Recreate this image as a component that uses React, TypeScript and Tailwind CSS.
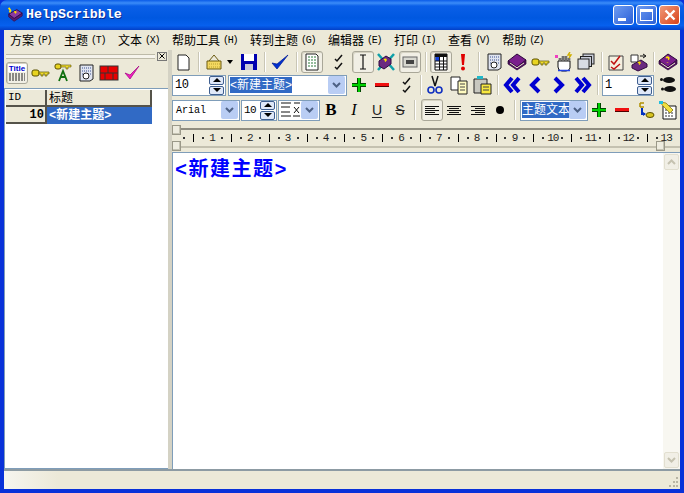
import type { ReactNode } from "react";

const Tool = ({ pressed, className = "", children }: { pressed?: boolean; className?: string; children?: ReactNode }) => (
  <div
    className={`flex h-[22px] w-[22px] shrink-0 items-center justify-center ${
      pressed ? "rounded-[3px] border border-[#a9a798] bg-[#f1efe5] shadow-[inset_1px_1px_0_#d5d2c2]" : ""
    } ${className}`}
  >
    {children}
  </div>
);

const Sep = ({ className = "" }: { className?: string }) => (
  <div className={`h-[20px] w-[2px] shrink-0 border-r border-white bg-[#c9c6b5] ${className}`} />
);

const Ico = ({ children, size = 20 }: { children: ReactNode; size?: number }) => (
  <svg width={size} height={size} viewBox="0 0 20 20" className="block">
    {children}
  </svg>
);

const DropBtn = () => (
  <div className="flex h-[18px] w-[17px] shrink-0 items-center justify-center rounded-[2px] bg-[#b9cdf4]">
    <svg width="9" height="6" viewBox="0 0 9 6">
      <path d="M1 1l3.5 3.5L8 1" fill="none" stroke="#4d6185" strokeWidth="2" />
    </svg>
  </div>
);

const Spin = ({ value, className = "", text = "text-[12px]" }: { value: string; className?: string; text?: string }) => (
  <div className={`flex h-[21px] shrink-0 items-center justify-between border border-[#7f9db9] bg-white pl-[2px] pr-[1px] ${className}`}>
    <span className={`font-['Liberation_Mono',monospace] leading-none tracking-[-0.5px] text-black ${text}`}>{value}</span>
    <div className="flex w-[15px] flex-col gap-[1px]">
      <div className="flex h-[9px] items-center justify-center rounded-[2px] border border-[#3f5f90] bg-[#dfe8f8]">
        <div className="h-0 w-0 border-x-[4px] border-b-[4px] border-x-transparent border-b-black" />
      </div>
      <div className="flex h-[9px] items-center justify-center rounded-[2px] border border-[#3f5f90] bg-[#dfe8f8]">
        <div className="h-0 w-0 border-x-[4px] border-t-[4px] border-x-transparent border-t-black" />
      </div>
    </div>
  </div>
);

const Combo = ({ className = "", children }: { className?: string; children?: ReactNode }) => (
  <div className={`flex h-[21px] shrink-0 items-center justify-between border border-[#7f9db9] bg-white pl-[1px] pr-[1px] ${className}`}>
    <div className="flex min-w-0 items-center overflow-hidden">{children}</div>
    <DropBtn />
  </div>
);

const Plus = () => (
  <Ico>
    <path d="M10 3v14M3 10h14" stroke="#004800" strokeWidth="4" />
    <path d="M10 3v14M3 10h14" stroke="#00d000" strokeWidth="2" />
  </Ico>
);
const Minus = () => (
  <Ico>
    <rect x="3" y="8" width="14" height="3" fill="#f01010" />
    <rect x="3" y="11" width="14" height="1" fill="#500000" />
  </Ico>
);
const Checks = () => (
  <Ico>
    <path d="M6 7l2 2 5-6M6 15l2 2 5-6" fill="none" stroke="#111" strokeWidth="1.5" />
  </Ico>
);
const Key = () => (
  <Ico>
    <rect x="2" y="7" width="7" height="6" rx="2" fill="#e8d420" stroke="#5a5000" />
    <path d="M9 9h10v2h-2v2h-2v-2h-2v2h-2v-2H9z" fill="#f0dc30" stroke="#5a5000" strokeWidth="0.7" />
  </Ico>
);
const Book = ({ mark }: { mark?: boolean }) => (
  <Ico>
    <path d="M1 9l9-7 9 6-9 7z" fill="#7a1f8c" stroke="#2a0638" />
    <path d="M1 9v3l9 6 9-6V8l-9 7z" fill="#50125f" stroke="#2a0638" strokeWidth="0.7" />
    <path d="M3 11l7 4.8 7-4.8" fill="none" stroke="#f0e8d0" />
    {mark && <path d="M8 6c2-2 4 0 2 1.5M9.5 10v.5" fill="none" stroke="#ffe000" strokeWidth="1.6" />}
  </Ico>
);
const DocLines = () => (
  <Ico>
    <path d="M4 2h10l2 2v14H4z" fill="#fff" stroke="#222" />
    <path d="M6 5h8M6 8h8M6 11h8M6 14h8" stroke="#2a7a3a" strokeWidth="1.2" strokeDasharray="2 1" />
  </Ico>
);
const DocDots = () => (
  <Ico>
    <path d="M4 2h13v14l-3 2H4z" fill="#dfe4f0" stroke="#222" />
    <path d="M6 5h9M6 8h9M6 11h3M12 11h3" stroke="#3a5090" strokeDasharray="1 1" />
    <circle cx="10" cy="13" r="3" fill="#fff" stroke="#222" />
  </Ico>
);
const Arrow = ({ dir, dbl }: { dir: "l" | "r"; dbl?: boolean }) => (
  <Ico>
    <g fill="none" stroke="#0000d0" strokeWidth="4" transform={dir === "l" ? "translate(20 0) scale(-1 1)" : undefined}>
      {dbl ? (
        <>
          <path d="M3 3l6 7-6 7" />
          <path d="M10 3l6 7-6 7" />
        </>
      ) : (
        <path d="M6 3l7 7-7 7" />
      )}
    </g>
  </Ico>
);
const AlignLines = ({ kind }: { kind: "l" | "c" | "r" }) => {
  const widths = [14, 10, 14, 10, 14];
  return (
    <svg width="14" height="11" viewBox="0 0 14 11" shapeRendering="crispEdges">
      {widths.map((w, i) => (
        <rect key={i} x={kind === "l" ? 0 : kind === "c" ? (14 - w) / 2 : 14 - w} y={i * 2 + 1} width={w} height="1" fill="#111" />
      ))}
    </svg>
  );
};
const Smiley = () => (
  <Ico>
    <path d="M5 3h4M5 3v4M5 7h4" stroke="#b09000" strokeWidth="1.5" fill="none" />
    <path d="M7 8v6h3" stroke="#0030c0" strokeWidth="2" fill="none" />
    <path d="M8 12l3 2-3 2z" fill="#0030c0" />
    <ellipse cx="15" cy="15" rx="4" ry="2.5" fill="#d8c420" stroke="#5a5000" />
  </Ico>
);
const Wand = () => (
  <Ico>
    <path d="M5 6h13v13H5z" fill="#fff" stroke="#111" />
    <path d="M7 10h9M7 13h9M7 16h9" stroke="#333" strokeDasharray="2 1" />
    <path d="M2 2l6 1 7 7-3 3-7-7z" fill="#f0e040" stroke="#807000" strokeWidth="0.7" />
    <rect x="1" y="1" width="4" height="3" fill="#20c0e0" />
  </Ico>
);
const Foot = () => (
  <Ico>
    <ellipse cx="10" cy="5" rx="6" ry="3" fill="#111" />
    <circle cx="2.5" cy="4.5" r="1.5" fill="#111" />
    <ellipse cx="11" cy="14" rx="6" ry="3" fill="#111" />
    <circle cx="3.5" cy="14" r="1.5" fill="#111" />
  </Ico>
);

const Menu = ({ label, k }: { label: string; k: string }) => (
  <div className="flex items-center">
    <span>{label}</span>
    <span className="ml-[3px] w-[14px] font-['Liberation_Mono',monospace] text-[10px] tracking-[-1.3px]">({k})</span>
  </div>
);

const menus = [
  ["方案", "P"],
  ["主题", "T"],
  ["文本", "X"],
  ["帮助工具", "H"],
  ["转到主题", "G"],
  ["编辑器", "E"],
  ["打印", "I"],
  ["查看", "V"],
  ["帮助", "Z"],
];

const Dot = () => <span className="mx-auto h-[2px] w-[2px] bg-[#333]" />;

const Ruler = () => (
  <div className="relative h-[20px] overflow-hidden border-y-2 border-t-[#8f8d80] border-b-[#c4c1b0] bg-[#ece9d8]">
    <div className="flex h-full pl-[7.5px] font-['Liberation_Mono',monospace] text-[11px] text-[#222]">
      {Array.from({ length: 13 }, (_, i) => (
        <div key={i} className="grid w-[37.8px] shrink-0 grid-cols-4 items-center justify-items-center">
          <Dot />
          <span className="mx-auto h-[8px] w-px bg-black" />
          <Dot />
          <span className={i >= 9 ? "tracking-[-1px]" : ""}>{i + 1}</span>
        </div>
      ))}
    </div>
  </div>
);

const Thumb = ({ className = "" }: { className?: string }) => (
  <div className={`absolute h-[10px] w-[9px] border border-[#9a9888] bg-[#eeecdf] shadow-[inset_-1px_-1px_0_#c6c4b4] ${className}`} />
);

const ScrollBtn = ({ up }: { up?: boolean }) => (
  <div className="flex h-[16px] w-[15px] items-center justify-center rounded-[2px] border border-[#e2dfd0] bg-[#f1efe6]">
    <svg width="9" height="6" viewBox="0 0 9 6">
      <path d={up ? "M1 5l3.5-3.5L8 5" : "M1 1l3.5 3.5L8 1"} fill="none" stroke="#c5c2b0" strokeWidth="2" />
    </svg>
  </div>
);

export default function App() {
  return (
    <div className="flex h-[493px] w-[684px] flex-col overflow-hidden bg-[#0831d9] font-['Liberation_Sans','Noto_Sans_CJK_SC',sans-serif]">
      {/* title bar */}
      <div className="flex h-[30px] shrink-0 items-center rounded-t-[7px] bg-[linear-gradient(to_bottom,#0a5be8_0%,#3b8cf8_10%,#0a5fe8_20%,#0058e0_60%,#0660ee_85%,#0340c8_100%)] pl-[6px] pr-[4px]">
        <svg width="18" height="18" viewBox="0 0 20 20">
          <path d="M3 9l9-5 6 4-9 6z" fill="#8a3aa0" stroke="#300a40" />
          <path d="M3 9v3l6 5 9-6V8l-9 6z" fill="#5a1a70" stroke="#300a40" strokeWidth="0.7" />
          <path d="M3 2l2 3-1 2" fill="none" stroke="#ffe000" strokeWidth="2" />
          <path d="M9 7c2-2 3 0 1 1" fill="none" stroke="#ffe000" strokeWidth="1.4" />
        </svg>
        <span className="ml-[2px] font-['Liberation_Mono',monospace] text-[13.3px] font-bold text-white [text-shadow:1px_1px_0_#0a2a90]">
          HelpScribble
        </span>
        <div className="ml-auto flex items-center gap-[2px]">
          <div className="flex h-[20px] w-[21px] items-end rounded-[3px] border border-white bg-[linear-gradient(135deg,#6f9cf0,#2a5fd8)] pb-[3px] pl-[4px]">
            <div className="h-[3px] w-[8px] bg-white" />
          </div>
          <div className="flex h-[20px] w-[21px] items-center justify-center rounded-[3px] border border-white bg-[linear-gradient(135deg,#6f9cf0,#2a5fd8)]">
            <div className="h-[12px] w-[13px] border border-t-[3px] border-white" />
          </div>
          <div className="flex h-[20px] w-[21px] items-center justify-center rounded-[3px] border border-white bg-[linear-gradient(135deg,#f09a78,#d8421a)]">
            <svg width="12" height="12" viewBox="0 0 12 12">
              <path d="M1.5 1.5l9 9M10.5 1.5l-9 9" stroke="#fff" strokeWidth="2.4" />
            </svg>
          </div>
        </div>
      </div>

      {/* client area inside the blue frame */}
      <div className="mx-[4px] mb-[4px] flex min-h-0 flex-1 flex-col bg-[#ece9d8]">
        <div className="flex h-[20px] shrink-0 items-center gap-[13px] pt-[1px] pl-[6px] text-[12px] text-black">
          {menus.map(([label, k]) => (
            <Menu key={k} label={label} k={k} />
          ))}
        </div>

        <div className="flex min-h-0 flex-1 border-b-2 border-[#8d9ba3]">
          {/* left panel */}
          <div className="flex w-[164px] shrink-0 flex-col">
            <div className="flex h-[12px] items-center pl-[2px]">
              <div className="h-[5px] w-[149px] border-y border-[#bdbaa8] bg-[#f6f4ec]" />
              <div className="ml-[2px] flex h-[9px] w-[10px] items-center justify-center border border-[#777] bg-[#ece9d8]">
                <svg width="6" height="6" viewBox="0 0 6 6">
                  <path d="M0.5 0.5l5 5M5.5 0.5l-5 5" stroke="#000" />
                </svg>
              </div>
            </div>
            <div className="flex h-[26px] items-start pl-[2px]">
              <Tool pressed>
                <svg width="18" height="18" viewBox="0 0 18 18">
                  <rect x="0" y="0" width="18" height="8" fill="#fff" />
                  <text x="9" y="7" textAnchor="middle" fontSize="8" fontWeight="700" fontFamily="Liberation Sans" fill="#0000d0">Title</text>
                  <path d="M1 10h16M1 12h16M1 14h16M1 16h16" stroke="#222" strokeDasharray="2 1" />
                </svg>
              </Tool>
              <Tool className="ml-[1px]"><Key /></Tool>
              <Tool className="ml-[1px]">
                <Ico>
                  <rect x="2" y="1" width="6" height="5" rx="2" fill="#e8d420" stroke="#5a5000" />
                  <path d="M8 2h10v2h-3v2h-2V4H8z" fill="#f0dc30" stroke="#5a5000" strokeWidth="0.6" />
                  <path d="M6 18l4-10 4 10M7.5 14h5" fill="none" stroke="#107010" strokeWidth="1.8" />
                </Ico>
              </Tool>
              <Tool className="ml-[1px]"><DocDots /></Tool>
              <Tool className="ml-[1px]">
                <Ico>
                  <rect x="1" y="3" width="18" height="14" fill="#e80000" stroke="#333" />
                  <path d="M1 10h18M9 3v7M6 10v7M14 10v7" stroke="#333" />
                </Ico>
              </Tool>
              <Tool className="ml-[1px]">
                <Ico>
                  <path d="M3 10l5 6 9-13-9 9z" fill="#f020c0" stroke="#a00080" strokeWidth="0.7" />
                </Ico>
              </Tool>
            </div>
            <div className="min-h-0 flex-1 border border-[#7f9db9] border-r-0 bg-white pt-[1px] pl-[1px] pr-[15px]">
              <div className="grid grid-cols-[41px_105px] text-[12px] text-black">
                <div className="flex h-[17px] items-center border-r-2 border-b-2 border-[#55534a] bg-[#ece9d8] pl-[2px] font-['Liberation_Mono',monospace] text-[11px]">ID</div>
                <div className="flex h-[17px] items-center border-r-2 border-b-2 border-[#55534a] bg-[#ece9d8] pl-[2px]">标题</div>
                <div className="flex h-[17px] items-center justify-end border-r-2 border-b-2 border-[#55534a] bg-[#ece9d8] pr-[1px] font-['Liberation_Mono',monospace] text-[12px] font-bold">10</div>
                <div className="flex h-[17px] items-center whitespace-nowrap bg-[#316ac5] pl-[2px] font-['Liberation_Mono','Noto_Sans_CJK_SC',monospace] text-[12px] font-bold text-white">&lt;新建主题&gt;</div>
              </div>
            </div>
          </div>

          {/* splitter */}
          <div className="w-[4px] shrink-0 bg-[#d4d2c4]" />

          {/* right panel */}
          <div className="relative flex min-w-0 flex-1 flex-col">
            <div className="flex h-[23px] shrink-0 items-center pl-0">
              <Tool>
                <Ico>
                  <path d="M5 3h8l3 3v12H5z" fill="#fff" stroke="#222" />
                </Ico>
              </Tool>
              <Sep className="ml-[4px]" />
              <Tool className="ml-[3px]">
                <Ico>
                  <path d="M3 9h14v8H3z" fill="#f4d860" stroke="#6a5a10" />
                  <path d="M5 9l5-6 5 6" fill="none" stroke="#6a5a10" />
                  <path d="M3 12h14M3 15h14" stroke="#b8a030" strokeDasharray="1 1" />
                </Ico>
              </Tool>
              <div className="ml-[2px] h-0 w-0 shrink-0 border-x-[3.5px] border-t-[4px] border-x-transparent border-t-black" />
              <Tool className="ml-[5px]">
                <Ico>
                  <path d="M2 2h16v16H2z" fill="#0000b0" />
                  <rect x="5" y="2" width="10" height="7" fill="#fff" />
                  <rect x="6" y="12" width="8" height="6" fill="#c8c8d8" />
                </Ico>
              </Tool>
              <Sep className="ml-[4px]" />
              <Tool className="ml-[3px]">
                <Ico>
                  <path d="M2 11l5 6L18 3 7 12z" fill="#0030d0" stroke="#001890" strokeWidth="0.7" />
                </Ico>
              </Tool>
              <Sep className="ml-[5px]" />
              <Tool pressed className="ml-[3px]"><DocLines /></Tool>
              <Tool className="ml-[5px] w-[16px]"><Checks /></Tool>
              <Tool pressed className="ml-[2px]">
                <Ico>
                  <path d="M7 3h6M7 17h6M10 3v14" stroke="#111" strokeWidth="1.2" fill="none" />
                </Ico>
              </Tool>
              <Tool className="ml-[1px]">
                <Ico>
                  <path d="M2 2l7 8-7 8M18 2l-7 8 7 8" fill="none" stroke="#0fa0a8" strokeWidth="2.5" />
                  <path d="M3 9l7-5 5 3v5l-7 5-5-3z" fill="#6a2a80" stroke="#300a40" />
                  <path d="M8 8c2-2 3 0 1 1.5" fill="none" stroke="#ffe000" strokeWidth="1.5" />
                </Ico>
              </Tool>
              <Tool pressed className="ml-[2px]">
                <Ico>
                  <rect x="3" y="5" width="14" height="10" fill="#d8d8d0" stroke="#666" />
                  <rect x="6" y="8" width="8" height="4" fill="#444" />
                </Ico>
              </Tool>
              <Sep className="ml-[4px]" />
              <Tool pressed className="ml-[3px]">
                <Ico>
                  <path d="M4 2h12v16H4z" fill="#fff" stroke="#111" />
                  <rect x="4" y="2" width="12" height="3" fill="#111" />
                  <rect x="4.5" y="5" width="4" height="4" fill="#1040e0" />
                  <path d="M4 9h12M4 12h12M4 15h12M8.5 5v13M12.5 5v13" stroke="#111" />
                </Ico>
              </Tool>
              <Tool>
                <Ico>
                  <path d="M8 2h4l-1 11H9z" fill="#e00000" />
                  <circle cx="10" cy="16.5" r="2" fill="#e00000" />
                </Ico>
              </Tool>
              <Sep className="ml-[4px]" />
              <Tool className="ml-[3px]"><DocDots /></Tool>
              <Tool className="ml-[1px]"><Book /></Tool>
              <Tool className="ml-[1px]"><Key /></Tool>
              <Tool className="ml-[2px]">
                <Ico>
                  <path d="M4 9h12v7q-1 3-4 3H8q-4 0-4-4z" fill="#fff" stroke="#111" />
                  <path d="M6 9V6M9 9V4M12 9V4M15 9V6" stroke="#111" strokeWidth="2.4" />
                  <path d="M6 9V6M9 9V4M12 9V4M15 9V6" stroke="#fff" strokeWidth="0.8" />
                  <path d="M4 18.5h12" stroke="#2040e0" strokeWidth="1.5" />
                  <path d="M16 0l-2 3h3l-2 3" stroke="#d0b000" fill="none" strokeWidth="1.4" />
                  <rect x="1" y="3" width="3" height="3" fill="#f040c0" />
                </Ico>
              </Tool>
              <Tool>
                <Ico>
                  <rect x="7" y="2" width="11" height="10" fill="#c8ccd8" stroke="#222" />
                  <rect x="4.5" y="4.5" width="11" height="10" fill="#c8ccd8" stroke="#222" />
                  <rect x="2" y="7" width="11" height="10" fill="#d8dce4" stroke="#222" />
                </Ico>
              </Tool>
              <Sep className="ml-[4px]" />
              <Tool className="ml-[2px]">
                <Ico>
                  <path d="M3 4h14v14H3z" fill="#f4f0e0" stroke="#444" />
                  <path d="M5 9l3 3 6-8M5 15l3 2 6-5" fill="none" stroke="#c01010" strokeWidth="1.5" />
                </Ico>
              </Tool>
              <Tool className="ml-[1px]">
                <Ico>
                  <path d="M2 3h7v7H2z" fill="#fff" stroke="#333" />
                  <path d="M11 4h5M14 2l3 2-3 2" stroke="#111" fill="none" />
                  <path d="M3 13l9-5 6 4v3l-9 4-6-3z" fill="#6a2a80" stroke="#300a40" />
                  <path d="M9 11c2-2 3 0 1 1.5" fill="none" stroke="#ffe000" strokeWidth="1.4" />
                </Ico>
              </Tool>
              <Sep className="ml-[3px]" />
              <Tool className="ml-[2px]"><Book mark /></Tool>
            </div>

            <div className="flex h-[24px] shrink-0 items-center">
              <Spin value="10" className="w-[54px]" />
              <Combo className="ml-[2px] w-[119px]">
                <span className="bg-[#316ac5] text-[12px] leading-[16px] text-white">&lt;新建主题&gt;</span>
              </Combo>
              <Tool className="ml-[1px]"><Plus /></Tool>
              <Tool className="ml-[1px]"><Minus /></Tool>
              <Tool className="ml-[3px]"><Checks /></Tool>
              <Sep className="ml-[2px]" />
              <Tool className="ml-[2px]">
                <Ico>
                  <path d="M7 1l3 10M13 1l-3 10" stroke="#111" strokeWidth="1.5" />
                  <circle cx="6" cy="15" r="3" fill="none" stroke="#1030c0" strokeWidth="1.6" />
                  <circle cx="14" cy="15" r="3" fill="none" stroke="#1030c0" strokeWidth="1.6" />
                </Ico>
              </Tool>
              <Tool className="ml-[2px]">
                <Ico>
                  <path d="M2 2h9v13H2z" fill="#fff" stroke="#222" />
                  <path d="M9 6h9v13H9z" fill="#fffbc0" stroke="#222" />
                  <path d="M11 9h5M11 12h5M11 15h5" stroke="#444" />
                </Ico>
              </Tool>
              <Tool className="ml-[1px]">
                <Ico>
                  <path d="M2 4h13v14H2z" fill="#c8c8c0" stroke="#222" />
                  <rect x="5" y="1" width="6" height="3" fill="#20b8c8" />
                  <path d="M9 9h10v10H9z" fill="#f8e840" stroke="#222" />
                  <path d="M11 12h6M11 15h6" stroke="#444" />
                </Ico>
              </Tool>
              <Sep className="ml-[4px]" />
              <Tool className="ml-[2px]"><Arrow dir="l" dbl /></Tool>
              <Tool className="ml-[1px]"><Arrow dir="l" /></Tool>
              <Tool className="ml-[2px]"><Arrow dir="r" /></Tool>
              <Tool className="ml-[2px]"><Arrow dir="r" dbl /></Tool>
              <Sep className="ml-[3px]" />
              <Spin value="1" className="ml-[3px] w-[52px]" />
              <Tool className="ml-[4px]"><Foot /></Tool>
            </div>

            <div className="flex h-[26px] shrink-0 items-center">
              <Combo className="w-[68px]">
                <span className="pl-[2px] font-['Liberation_Mono',monospace] text-[10px] text-black">Arial</span>
              </Combo>
              <Spin value="10" text="text-[11px]" className="ml-[1px] w-[36px]" />
              <Combo className="ml-[1px] w-[42px]">
                <svg width="21" height="16" viewBox="0 0 21 16">
                  <path d="M1 1h10M1 5h9M1 10h9M1 14h10M14 1h6M13 14h7M14 5l5 6M19 5l-5 6" stroke="#111" fill="none" />
                </svg>
              </Combo>
              <Tool>
                <span className="font-['Liberation_Serif',serif] text-[17px] font-bold text-black">B</span>
              </Tool>
              <Tool className="ml-[1px]">
                <span className="font-['Liberation_Serif',serif] text-[16px] italic text-black">I</span>
              </Tool>
              <Tool className="ml-[1px]">
                <span className="font-['Liberation_Sans',sans-serif] text-[14px] text-[#222] underline underline-offset-2">U</span>
              </Tool>
              <Tool className="ml-[1px]">
                <span className="font-['Liberation_Sans',sans-serif] text-[14px] text-[#222] line-through">S</span>
              </Tool>
              <Sep className="ml-[3px]" />
              <Tool pressed className="ml-[5px]"><AlignLines kind="l" /></Tool>
              <Tool><AlignLines kind="c" /></Tool>
              <Tool className="ml-[2px]"><AlignLines kind="r" /></Tool>
              <Tool>
                <div className="h-[8px] w-[8px] rounded-full bg-black" />
              </Tool>
              <Sep className="ml-[3px]" />
              <Combo className="ml-[4px] w-[68px]">
                <span className="whitespace-nowrap bg-[#316ac5] text-[12px] leading-[16px] text-white">主题文本</span>
              </Combo>
              <Tool><Plus /></Tool>
              <Tool className="ml-[1px]"><Minus /></Tool>
              <Tool className="ml-[1px]"><Smiley /></Tool>
              <Tool className="ml-[1px]"><Wand /></Tool>
            </div>

            <div className="mt-[5px] shrink-0">
              <Ruler />
            </div>

            {/* ruler sliders */}
            <Thumb className="left-0 top-[75px]" />
            <Thumb className="left-0 top-[91px]" />
            <Thumb className="left-[484px] top-[91px]" />

            {/* editor */}
            <div className="mt-[4px] flex min-h-0 flex-1 border-t border-l border-[#7f9db9] bg-white">
              <div className="min-w-0 flex-1 pt-[5px] pl-[2px] font-['Liberation_Mono','Noto_Sans_CJK_SC',monospace] text-[20px] font-bold leading-[26px] tracking-[1.5px] text-[#0000ff]">
                &lt;新建主题&gt;
              </div>
              <div className="flex w-[17px] shrink-0 flex-col items-center justify-between bg-[#f8f7f1] py-[1px]">
                <ScrollBtn up />
                <ScrollBtn />
              </div>
            </div>
          </div>
        </div>

        {/* status bar */}
        <div className="relative h-[18px] shrink-0 bg-[linear-gradient(to_right,#f6f5ef_0%,#ece9d8_8%)]">
          <svg width="12" height="12" viewBox="0 0 12 12" className="absolute right-[1px] bottom-[1px]">
            <path d="M9 1h2v2H9zM6 5h2v2H6zM9 5h2v2H9zM2 9h2v2H2zM6 9h2v2H6zM9 9h2v2H9z" fill="#b8b5a4" />
          </svg>
        </div>
      </div>
    </div>
  );
}
